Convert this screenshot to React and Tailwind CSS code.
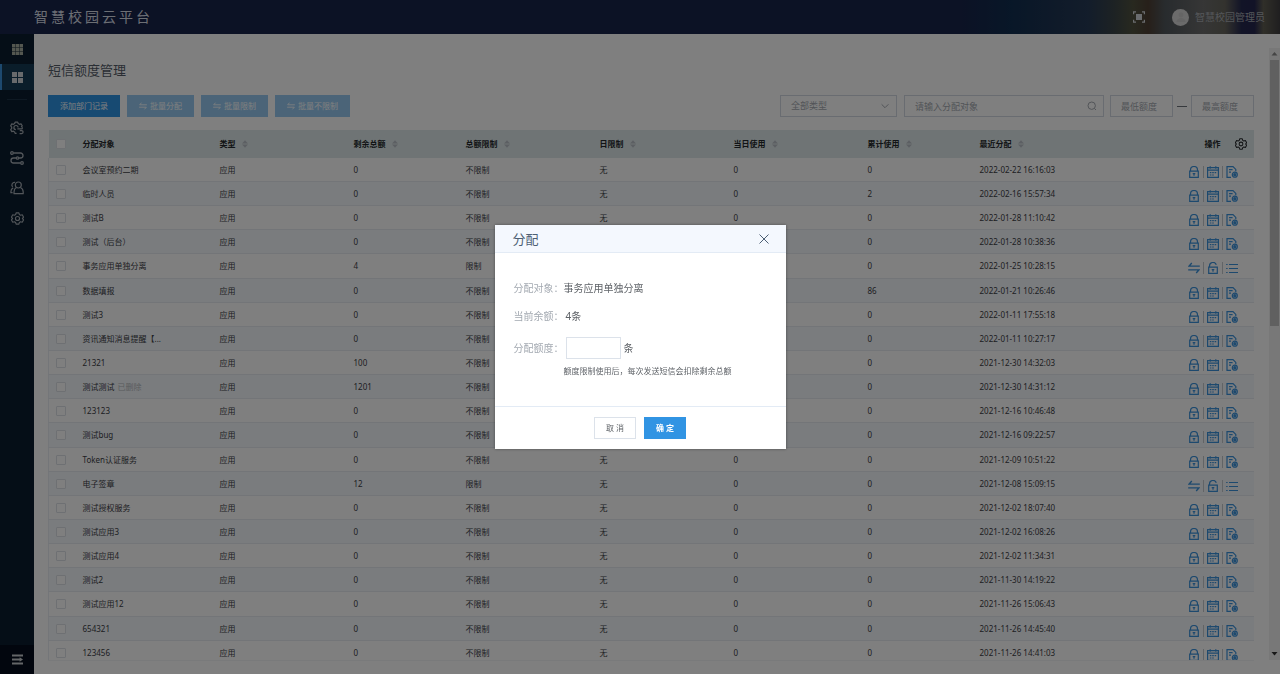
const FONT = "font-['Noto_Sans','Noto_Sans_CJK_SC',sans-serif]";

const columns = ['类型', '剩余总额', '总额限制', '日限制', '当日使用', '累计使用', '最近分配'];

const rows = [
  ['会议室预约二期', '0', '不限制', '0', '2022-02-22 16:16:03'],
  ['临时人员', '0', '不限制', '2', '2022-02-16 15:57:34'],
  ['测试B', '0', '不限制', '0', '2022-01-28 11:10:42'],
  ['测试（后台）', '0', '不限制', '0', '2022-01-28 10:38:36'],
  ['事务应用单独分离', '4', '限制', '0', '2022-01-25 10:28:15'],
  ['数据填报', '0', '不限制', '86', '2022-01-21 10:26:46'],
  ['测试3', '0', '不限制', '0', '2022-01-11 17:55:18'],
  ['资讯通知消息提醒【...', '0', '不限制', '0', '2022-01-11 10:27:17'],
  ['21321', '100', '不限制', '0', '2021-12-30 14:32:03'],
  ['测试测试', '1201', '不限制', '0', '2021-12-30 14:31:12', '已删除'],
  ['123123', '0', '不限制', '0', '2021-12-16 10:46:48'],
  ['测试bug', '0', '不限制', '0', '2021-12-16 09:22:57'],
  ['Token认证服务', '0', '不限制', '0', '2021-12-09 10:51:22'],
  ['电子签章', '12', '限制', '0', '2021-12-08 15:09:15'],
  ['测试授权服务', '0', '不限制', '0', '2021-12-02 18:07:40'],
  ['测试应用3', '0', '不限制', '0', '2021-12-02 16:08:26'],
  ['测试应用4', '0', '不限制', '0', '2021-12-02 11:34:31'],
  ['测试2', '0', '不限制', '0', '2021-11-30 14:19:22'],
  ['测试应用12', '0', '不限制', '0', '2021-11-26 15:06:43'],
  ['654321', '0', '不限制', '0', '2021-11-26 14:45:40'],
  ['123456', '0', '不限制', '0', '2021-11-26 14:41:03'],
];

function Svg({ className, children, viewBox = '0 0 12 12', stroke = 1.2 }) {
  return (
    <svg
      className={className}
      viewBox={viewBox}
      fill="none"
      stroke="currentColor"
      strokeWidth={stroke}
      aria-hidden="true"
    >
      {children}
    </svg>
  );
}

const Lock = () => (
  <Svg className="size-3">
    <path d="M2.500 5V4a3.500 3.500 0 0 1 7 0V5M1.700 5.200h8.600v6.200H1.700zM6 7.200v2.600M4.700 7.700h2.600" />
  </Svg>
);

const Unlock = () => (
  <Svg className="size-3">
    <path d="M2.500 5V4a3.500 3.500 0 0 1 6.800-1.200M1.700 5.200h8.600v6.200H1.700zM6 7.200v2.600M4.700 7.700h2.600" />
  </Svg>
);

const Calendar = () => (
  <Svg className="size-3">
    <path d="M.6 1.600h10.800v9.800H.6zM.6 4.200h10.800M3.200.2v2.600M8.800.2v2.600" />
    <path d="M2.800 6.700h6.600M2.800 9h4.400" strokeDasharray="1.600 .8" />
  </Svg>
);

const DocGear = () => (
  <Svg className="size-3">
    <path d="M5 11.400H1V.6h6L9.800 3.400v1.800M3 3.600h3.600M3 6.200h2" />
    <circle cx="8.800" cy="8.700" r="2.500" />
    <circle cx="8.800" cy="8.700" r="1" fill="currentColor" />
  </Svg>
);

const Swap = ({ className = 'size-3' }) => (
  <Svg className={className} stroke={1.3}>
    <path d="M3.800 1 1 4.200h10.800M.2 7.800H11L8.200 11" />
  </Svg>
);

const List = () => (
  <Svg className="size-3">
    <path d="M3 2.500h9M3 6.500h9M3 10.500h9M.2 2.500h1.400M.2 6.500h1.400M.2 10.500h1.400" />
  </Svg>
);

const Gear = ({ className }) => (
  <Svg className={className} viewBox="0 0 14 14">
    <path
      strokeLinejoin="round"
      d="M5.500.9h3l.5 1.800 1.300.8 1.800-.5 1.500 2.600L12.300 7l1.300 1.400-1.500 2.600-1.800-.5-1.300.8-.5 1.800h-3L5 11.300l-1.300-.8-1.800.5L.4 8.400 1.700 7 .4 5.600 1.900 3l1.800.5L5 2.700z"
    />
    <circle cx="7" cy="7" r="2.200" />
  </Svg>
);

function RowActions({ limited }) {
  const items = limited
    ? [['分配', <Swap />], ['解除限制', <Unlock />], ['明细', <List />]]
    : [['限制', <Lock />], ['日限制', <Calendar />], ['记录', <DocGear />]];
  return (
    <div className="flex items-center justify-end gap-[3px] pt-[5px] text-[#3a92dc]">
      {items.map(([label, icon], i) => (
        <div key={label} className="flex items-center gap-[3px]">
          {i > 0 && <span className="h-3 w-px bg-[#c4c8cc]" />}
          <button type="button" aria-label={label} className="block">
            {icon}
          </button>
        </div>
      ))}
    </div>
  );
}

function SortMark() {
  return (
    <svg className="size-2" viewBox="0 0 8 8" fill="#b9bfc6" aria-hidden="true">
      <path d="M1 3.400 4 .2l3 3.200zM1 4.600h6L4 7.800z" />
    </svg>
  );
}

function Check({ label }) {
  return (
    <input
      type="checkbox"
      aria-label={label}
      className="block size-[10px] appearance-none rounded-[1px] border border-[#dde1e7] bg-white"
    />
  );
}

function Header() {
  return (
    <header className="flex h-[34px] items-center justify-between bg-[linear-gradient(90deg,#18244a_0%,#18244a_75%,#112e50_79%,#1c3352_82%,#263a56_85%,#3a4448_87%,#50523f_88.5%,#4e4034_89.7%,#50575c_91%,#6c6c6c_94%,#66655c_95.7%,#24284e_97%,#24264e_98%,#605e52_98.7%,#403e40_100%)] pr-[15px] pl-[34px]">
      <h1 className="text-[14px] leading-5 tracking-[3px] text-[#d9dee8]">智慧校园云平台</h1>
      <div className="flex items-center text-[#d4d8dc]">
        <button type="button" aria-label="全屏" className="mr-[27px]">
          <Svg className="size-3">
            <path d="M.6 3.200V.8H3M9 .8h2.400v2.400M11.400 8.800v2.400H9M3 11.200H.6V8.800" />
            <path d="M3 3h6v6H3z" fill="currentColor" stroke="none" />
          </Svg>
        </button>
        <span className="mr-[6px] grid size-[17px] place-items-center rounded-full bg-[#d6d6d6]">
          <svg className="size-3" viewBox="0 0 12 12" fill="#cacaca" aria-hidden="true">
            <circle cx="6" cy="4" r="2.400" />
            <path d="M1.500 11a4.500 4 0 0 1 9 0z" />
          </svg>
        </span>
        <span className="text-[10px] leading-4 text-[#a8acb2]">智慧校园管理员</span>
      </div>
    </header>
  );
}

function Sidebar() {
  return (
    <nav className="flex w-[34px] shrink-0 flex-col items-center bg-[#0b1d2e] text-[#a6adb5]">
      <a href="#apps" aria-label="全部应用" className="grid h-[30px] w-full place-items-center">
        <svg className="size-[11px]" viewBox="0 0 11 11" fill="#a9aea0" aria-hidden="true">
          {[0, 3.8, 7.6].map((y) =>
            [0, 3.8, 7.6].map((x) => <rect key={x + '-' + y} x={x} y={y} width="3.4" height="3.4" />),
          )}
        </svg>
      </a>
      <a href="#dashboard" aria-label="工作台" className="grid h-[26px] w-full place-items-center border-l-2 border-[#3a92dc] bg-[#153a55] pr-0.5">
        <svg className="size-[11px]" viewBox="0 0 11 11" fill="#d0d4d8" aria-hidden="true">
          <path d="M0 0h5v5H0zM6 0h5v5H6zM0 6h5v5H0zM6 6h5v5H6z" />
        </svg>
      </a>
      <span className="mt-[9px] h-px w-5 bg-[#1d3347]" />
      <div className="mt-[13px] flex w-full flex-col">
        <a href="#service" aria-label="服务配置" className="grid h-[30px] place-items-center">
          <Svg className="size-[14px]" viewBox="0 0 14 14">
            <path
              strokeLinejoin="round"
              d="M6.600 12.400H5.100l-.5-1.500-1.200-.7-1.600.4L.7 8.700l1-1.300V6.100l-1-1.300 1.100-1.900 1.600.4 1.200-.7.5-1.500h2.600l.5 1.500 1.200.7 1.600-.4 1.200 1.900-1 1.400"
            />
            <path d="M5.800 8.700a2.100 2.100 0 1 1 2.300-2.200M7.400 7.800h4.600a1.300 1.300 0 0 0 .2-1.500M9.800 9.600h1.800a1.500 1.500 0 0 1 0 3h-2" />
          </Svg>
        </a>
        <a href="#flow" aria-label="流程" className="grid h-[30px] place-items-center">
          <Svg className="size-[14px]" viewBox="0 0 14 14" stroke={1.3}>
            <path d="M3.400 2h7.100a2.500 2.500 0 0 1 0 5H3.500a2.500 2.500 0 0 0 0 5h7.100" />
            <circle cx="2" cy="2" r="1.300" />
            <circle cx="12" cy="12" r="1.300" />
            <circle cx="7.500" cy="7" r="1.200" fill="#0b1d2e" />
          </Svg>
        </a>
        <a href="#users" aria-label="用户" className="grid h-[30px] place-items-center">
          <Svg className="size-[14px]" viewBox="0 0 14 14">
            <circle cx="8.300" cy="4" r="3" />
            <path
              strokeLinejoin="round"
              d="M6.300 6.500C4.700 7.400 4 9 4 11v1.700h9.200V11c0-2-.9-3.600-2.700-4.500M5 1.400a2.700 2.700 0 0 0-2.400 4.500M3.200 6.900C1.600 7.600.9 9 .9 10.700v1h1.700"
            />
          </Svg>
        </a>
        <a href="#settings" aria-label="设置" className="grid h-[30px] place-items-center">
          <Gear className="size-[13px]" />
        </a>
      </div>
      <button type="button" aria-label="展开菜单" className="mt-auto grid h-[29px] w-full place-items-center bg-[#040d1c] text-[#c8ccd0]">
        <Svg className="size-[11px]" viewBox="0 0 11 11" stroke={1.8}>
          <path d="M0 1.500h11M0 5.500h8M0 9.500h11" />
          <path d="M7.600 3.200 11 5.500 7.600 7.800z" fill="currentColor" stroke="none" />
        </Svg>
      </button>
    </nav>
  );
}

const fieldBox =
  'h-[22px] border border-[#d3d9e2] bg-white text-[9px] leading-4 text-[#6b7078] placeholder:text-[#a4a9b0]';

function Toolbar() {
  return (
    <div className="mt-[15px] flex items-center justify-between">
      <div className="flex gap-[7px] text-[8px] leading-4 text-white">
        <button type="button" className="h-[22px] w-[72px] bg-[#2e94e4]">添加部门记录</button>
        {['批量分配', '批量限制', '批量不限制'].map((label) => (
          <button key={label} type="button" disabled className="flex h-[22px] items-center gap-[3px] bg-[#96c9f1] px-3">
            <Swap className="size-2" />
            {label}
          </button>
        ))}
      </div>
      <div className="flex items-center">
        <div className="relative">
          <select aria-label="类型" className={`${fieldBox} block w-[117px] appearance-none pl-[10px] !text-[#a4a9b0]`}>
            <option>全部类型</option>
          </select>
          <Svg className="pointer-events-none absolute top-[7px] right-2 size-2 text-[#a4a9b0]" viewBox="0 0 8 8" stroke={1}>
            <path d="m.6 2.300 3.400 3.400 3.400-3.400" />
          </Svg>
        </div>
        <div className="relative ml-[7px]">
          <input type="text" aria-label="分配对象" placeholder="请输入分配对象" className={`${fieldBox} block w-[200px] pr-6 pl-[10px]`} />
          <Svg className="pointer-events-none absolute top-[6px] right-[7px] size-[10px] text-[#a4a9b0]" viewBox="0 0 10 10" stroke={1}>
            <circle cx="4.700" cy="4.700" r="3.700" />
            <path d="m7.400 7.400 1.600 1.600" />
          </Svg>
        </div>
        <input type="text" aria-label="最低额度" placeholder="最低额度" className={`${fieldBox} ml-[6px] w-[63px] px-[10px]`} />
        <span className="mx-1 h-px w-[10px] bg-[#6d727a]" />
        <input type="text" aria-label="最高额度" placeholder="最高额度" className={`${fieldBox} w-[63px] px-[10px]`} />
      </div>
    </div>
  );
}

function QuotaTable() {
  return (
    <div className="mt-[13px] min-h-0 flex-1 overflow-hidden border-b border-[#f2f4f7]">
      <table className="h-[calc(100%+5px)] w-full table-fixed border-collapse text-left text-[8px] leading-3 text-[#3c4045]">
        <colgroup>
          <col className="w-[27px]" />
          <col className="w-[137px]" />
          <col className="w-[134px]" />
          <col className="w-[112px]" />
          <col className="w-[134px]" />
          <col className="w-[134px]" />
          <col className="w-[134px]" />
          <col className="w-[112px]" />
          <col className="w-[172px]" />
          <col className="w-[110px]" />
        </colgroup>
        <thead>
          <tr className="h-[28px] bg-[#dfe8ea] text-[#25282c]">
            <th className="pl-[7px]"><Check label="全选" /></th>
            <th className="px-[7px] font-bold">分配对象</th>
            {columns.map((label) => (
              <th key={label} className="px-[7px] font-bold">
                <div className="flex items-center gap-[5px]">
                  {label}
                  <SortMark />
                </div>
              </th>
            ))}
            <th className="pr-2 font-bold">
              <div className="flex items-center justify-end gap-[14px]">
                操作
                <button type="button" aria-label="列设置"><Gear className="size-3" /></button>
              </div>
            </th>
          </tr>
        </thead>
        <tbody className="border-x border-[#e8edf3]">
          {rows.map(([name, left, limit, used, time, tag]) => (
            <tr key={name} className="border-b border-[#e6ebf1] even:bg-[#f4f8fd]">
              <td className="pt-px pl-[7px]"><Check label={name} /></td>
              <td className="truncate px-[7px] pt-px">
                {name}
                {tag && <span className="ml-[3px] text-[#b4b8bd]">{tag}</span>}
              </td>
              <td className="px-[7px] pt-px">应用</td>
              <td className="px-[7px] pt-px">{left}</td>
              <td className="px-[7px] pt-px">{limit}</td>
              <td className="px-[7px] pt-px">无</td>
              <td className="px-[7px] pt-px">0</td>
              <td className="px-[7px] pt-px">{used}</td>
              <td className="px-[7px] pt-px">{time}</td>
              <td className="pr-4"><RowActions limited={limit === '限制'} /></td>
            </tr>
          ))}
        </tbody>
      </table>
    </div>
  );
}

function ScrollRail() {
  return (
    <div className="mt-[14px] mb-[14px] flex w-[11px] shrink-0 flex-col items-center bg-[#f1f1f1]" aria-hidden="true">
      <svg className="h-3 w-[7px]" viewBox="0 0 7 12"><path d="M.5 7.500h6L3.500 4z" fill="#8a8a8a" /></svg>
      <div className="h-[266px] w-[9px] bg-[#c1c1c1]" />
      <svg className="mt-auto h-3 w-[7px]" viewBox="0 0 7 12"><path d="M.5 4h6L3.500 7.500z" fill="#303030" /></svg>
    </div>
  );
}

function AssignDialog() {
  return (
    <div className="fixed inset-0 flex items-center justify-center bg-black/50">
      <form role="dialog" aria-modal="true" aria-labelledby="assign-title" className="w-[291px] bg-white text-[10px] leading-4 text-[#5f6368] shadow-[0_0_3px_rgba(0,0,0,0.4)]">
        <div className="flex h-7 items-center justify-between border-b border-[#e3ebf5] bg-[#f4f8fe] pr-4 pl-[18px]">
          <h2 id="assign-title" className="text-[13px] leading-5 text-[#4c5f74]">分配</h2>
          <button type="button" aria-label="关闭" className="text-[#4c5f74]">
            <Svg className="size-3" stroke={1}><path d="m1.500 1.500 9 9M10.500 1.500l-9 9" /></Svg>
          </button>
        </div>
        <div className="grid grid-cols-[50px_1fr] items-center px-[19px] py-[27px]">
          <span className="whitespace-nowrap text-[#a3a9b1]">分配对象：</span>
          <span>事务应用单独分离</span>
          <span className="mt-3 whitespace-nowrap text-[#a3a9b1]">当前余额：</span>
          <span className="mt-3 pl-[2px]">4条</span>
          <label htmlFor="amount" className="mt-[13px] whitespace-nowrap text-[#a3a9b1]">分配额度：</label>
          <div className="mt-[13px] flex items-center gap-[3px] pl-[2px]">
            <input id="amount" type="text" className="h-[22px] w-[55px] border border-[#dce2ea] px-2" />
            条
          </div>
          <p className="col-start-2 mt-1 text-[8px] whitespace-nowrap">额度限制使用后，每次发送短信会扣除剩余总额</p>
        </div>
        <div className="flex h-[43px] items-center justify-center gap-2 border-t border-[#e3ebf5] text-[8px]">
          <button type="button" className="h-[22px] w-[42px] border border-[#dce2ea]">取 消</button>
          <button type="submit" className="h-[22px] w-[42px] bg-[#3194e3] font-bold text-white">确 定</button>
        </div>
      </form>
    </div>
  );
}

export default function App() {
  return (
    <div lang="zh-CN" className={`flex h-screen flex-col bg-white ${FONT}`}>
      <Header />
      <div className="flex min-h-0 flex-1">
        <Sidebar />
        <main className="flex min-w-0 flex-1 flex-col pt-[26px] pr-[15px] pb-[13px] pl-[14px]">
          <h2 className="text-[13px] leading-5 text-[#555c68]">短信额度管理</h2>
          <Toolbar />
          <QuotaTable />
        </main>
        <ScrollRail />
      </div>
      <AssignDialog />
    </div>
  );
}
